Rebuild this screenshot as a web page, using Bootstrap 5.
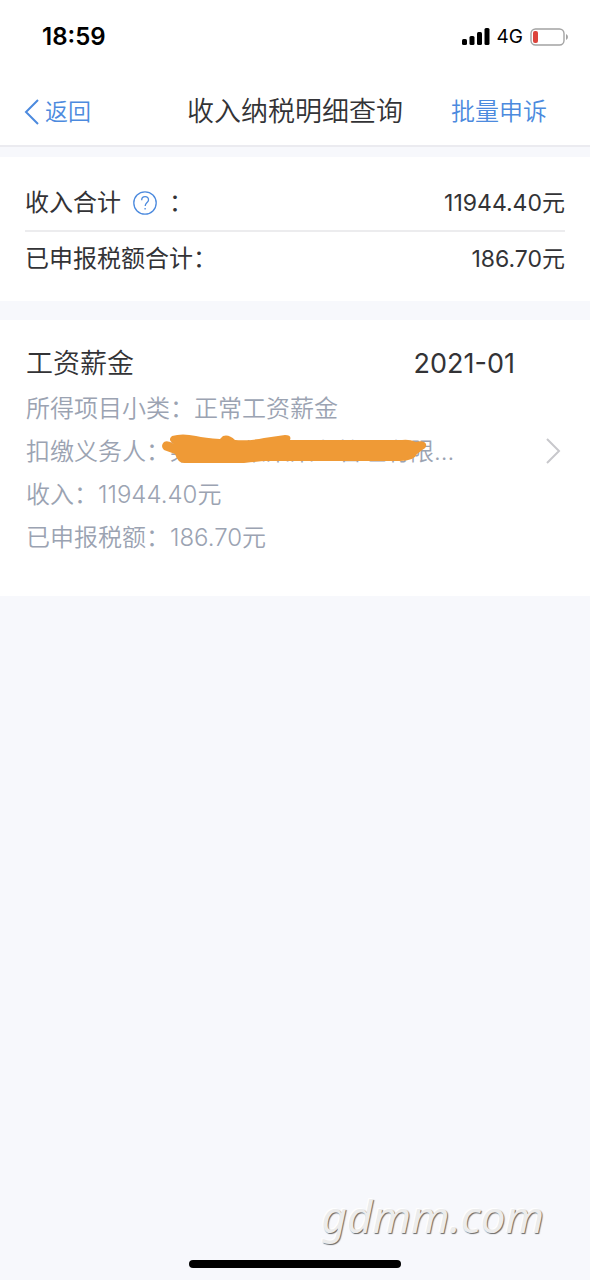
<!DOCTYPE html>
<html lang="zh-CN">
<head>
<meta charset="utf-8">
<meta name="viewport" content="width=device-width, initial-scale=1">
<title>收入纳税明细查询</title>
<link href="https://cdn.jsdelivr.net/npm/bootstrap@5.3.0/dist/css/bootstrap.min.css" rel="stylesheet">
<style>
  body { background: #f7f8fc; color: #333336; font-family: Inter, "Noto Sans CJK SC", sans-serif; font-size: 24px; line-height: 36px; }
  svg { display: block; flex: none; }
  .status { height: 72px; padding: 2px 21px 0 42px; color: #000; }
  .clock { font-size: 24px; font-weight: 600; }
  .network { font-size: 19px; line-height: 24px; margin: 0 7px; }
  .topbar { height: 75px; padding: 6px 24px 0; border-bottom: 2px solid #ebebf0; }
  .topbar .side { flex: 1 1 0; }
  .topbar h1 { font-size: 27px; line-height: 40px; font-weight: 350; }
  .blue-link { color: #4c8ade; font-weight: 350; text-decoration: none; }
  .back { font-size: 23px; }
  .appeal { margin-right: 19px; }
  .summary { margin-top: 10px; padding: 18px 25px 16px; }
  .sum-row { height: 55px; }
  .sum-row + .sum-row { border-top: 2px solid #ececee; }
  .amount { font-size: 23px; }
  .record { margin-top: 19px; padding: 22px 26px 37px; color: #333336; font-weight: 350; }
  .record-title { font-size: 27px; line-height: 43px; font-weight: 350; }
  .period { font-size: 27px; line-height: 43px; font-weight: 400; }
  .record-lines { line-height: 43px; color: #9ba3b2; margin-top: 2px; }
  .record-side { margin-right: 31px; }
  .scribble { position: absolute; left: 134px; top: 4px; }
  .site-mark { font: italic 44px/48px "Noto Sans", sans-serif; color: #ececec; text-shadow: 1px 1px 1px #666, -1px -1px 1px #fff; margin-right: 46px; }
  .home-bar { width: 36%; height: 8px; background: #000; margin: 20px auto 12px; }
</style>
</head>
<body class="min-vh-100 d-flex flex-column">
<header class="bg-white">
  <div class="status d-flex align-items-center">
    <span class="clock me-auto">18:59</span>
    <svg width="28" height="18" viewBox="0 0 28 18" aria-hidden="true"><rect x="0" y="11" width="5" height="6" rx="1.5"/><rect x="7.500" y="8" width="5" height="9" rx="1.500"/><rect x="15" y="4" width="5" height="13" rx="1.500"/><rect x="22.500" y="0" width="5" height="17" rx="1.500"/></svg>
    <span class="network">4G</span>
    <svg width="39" height="18" viewBox="0 0 39 18" aria-hidden="true"><rect x="1" y="1" width="33" height="16" rx="4.500" fill="none" stroke="#a3a3a3" stroke-width="1.400"/><rect x="3" y="3" width="5" height="12" rx="2" fill="#dc443c"/><path d="M36 6q2 1 2 3t-2 3z" fill="#a3a3a3"/></svg>
  </div>
  <nav class="topbar d-flex align-items-center">
    <div class="side"><a class="blue-link back d-inline-flex align-items-center align-middle" href="#"><svg class="me-1" width="17" height="26" viewBox="0 0 17 26" fill="none" stroke="currentColor" stroke-width="2" aria-hidden="true"><path d="M14 1L2 13l12 12"/></svg>返回</a></div>
    <h1 class="m-0">收入纳税明细查询</h1>
    <div class="side text-end"><a class="blue-link appeal" href="#">批量申诉</a></div>
  </nav>
</header>
<main>
  <section class="summary bg-white">
    <div class="sum-row d-flex align-items-center justify-content-between">
      <span class="d-flex align-items-center">收入合计
        <button class="btn p-0 border-0 ms-2 me-2 blue-link" type="button" aria-label="说明"><svg class="mx-1" width="24" height="24" viewBox="0 0 24 24" fill="none" stroke="currentColor" stroke-width="1.300"><circle cx="12" cy="12" r="11.200"/><path d="M8.700 9.200q0-3.500 3.400-3.500t3.400 3.200c0 2.500-3.300 2.700-3.300 6"/><path d="M12.100 17v1.600"/></svg></button>：</span>
      <span class="amount">11944.40元</span>
    </div>
    <div class="sum-row d-flex align-items-center justify-content-between">
      <span>已申报税额合计：</span>
      <span class="amount">186.70元</span>
    </div>
  </section>
  <a class="record bg-white d-flex align-items-center text-decoration-none" href="#">
    <div class="flex-grow-1">
      <div class="record-side d-flex justify-content-between">
        <h2 class="record-title m-0">工资薪金</h2>
        <span class="period">2021-01</span>
      </div>
      <div class="record-lines">
        <div>所得项目小类：正常工资薪金</div>
        <div class="position-relative">扣缴义务人：某某某某某某业管理有限...
          <svg class="scribble" width="268" height="31" viewBox="0 0 268 31" fill="#ef9a36" aria-hidden="true"><path d="M4 8Q0 12 4 16L15 20Q18 29 24 29H84Q95 28 103 27H240Q254 27 257 20Q261 17 262 16Q267 14 266 10Q264 6 256 8Q249 5 242 6H130Q132 1 125 1L104 4Q90 7 75 6Q69 0 63 2L60 5Q45 4 36 2Q22-1 12 2Q7 6 14 10Q8 6 4 8Z"/></svg>
        </div>
        <div>收入：11944.40元</div>
        <div>已申报税额：186.70元</div>
      </div>
    </div>
    <svg width="18" height="28" viewBox="0 0 18 28" fill="none" stroke="#c8c8cc" stroke-width="2" aria-hidden="true"><path d="M1 2l12 12L1 26"/></svg>
  </a>
</main>
<footer class="mt-auto">
  <div class="site-mark text-end">gdmm.com</div>
  <div class="home-bar rounded-pill"></div>
</footer>
<script src="https://cdn.jsdelivr.net/npm/bootstrap@5.3.0/dist/js/bootstrap.bundle.min.js"></script>
</body>
</html>
